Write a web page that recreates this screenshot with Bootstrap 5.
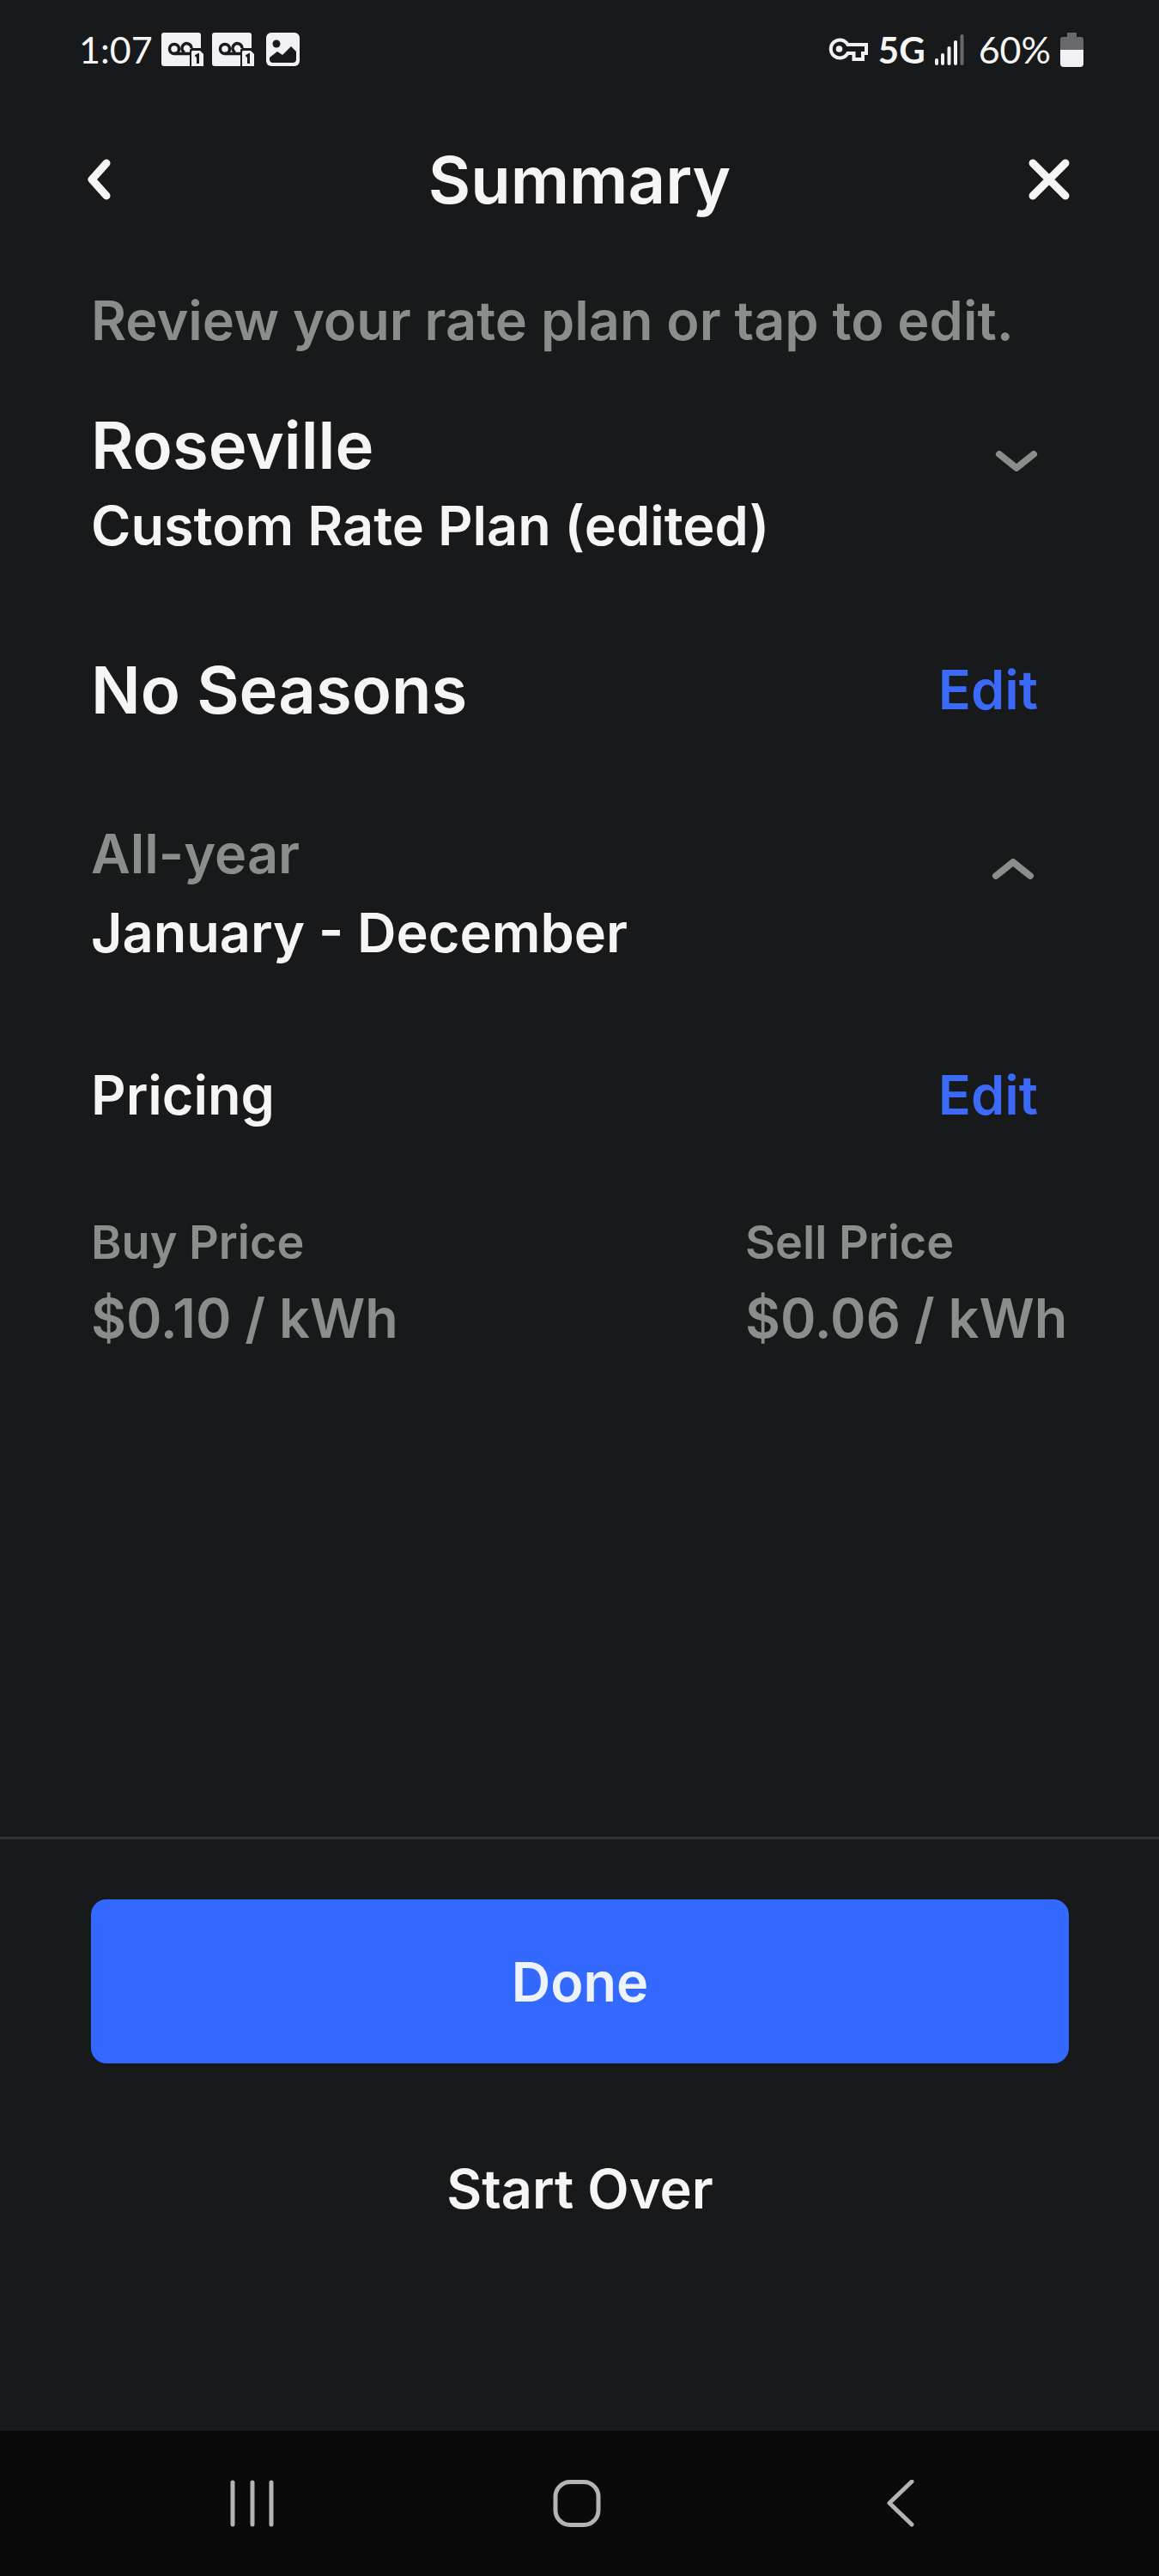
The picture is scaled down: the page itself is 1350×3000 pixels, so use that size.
<!DOCTYPE html>
<html lang="en">
<head>
<meta charset="utf-8">
<meta name="viewport" content="width=device-width, initial-scale=1">
<title>Summary</title>
<link href="https://cdn.jsdelivr.net/npm/bootstrap@5.3.0/dist/css/bootstrap.min.css" rel="stylesheet">
<style>
  body { background: #17191a; color: #f5f5f6; font-family: Inter, "Liberation Sans", sans-serif; font-weight: 600; }
  svg { display: block; flex: none; }
  .side-pad { padding-left: 106px; padding-right: 105px; }
  .status-bar { height: 116px; padding: 0 88px 0 92px; font-family: Lato, sans-serif; font-size: 43px; line-height: 60px; font-weight: 400; }
  .status-bar .network { font-size: 42px; font-weight: 700; }
  .status-left { gap: 10px; }
  .status-right { gap: 11px; }
  .app-header { height: 186px; padding: 0 92px; }
  .icon-btn { width: 64px; height: 64px; padding: 0; border: 0; background: none; color: inherit; display: flex; align-items: center; justify-content: center; }
  .text-title { font-size: 76px; line-height: 96px; font-weight: 600; margin: 0; }
  .text-main { font-size: 63px; line-height: 92px; font-weight: 600; margin: 0; }
  .text-label { font-size: 54px; line-height: 84px; font-weight: 600; margin: 0; }
  .tone-muted { color: #8b8c8c; }
  .intro { margin: 25px 0 51px; }
  .plan-rows { gap: 97px; padding-right: 36px; }
  .disclosure { border: 0; background: none; padding: 0; color: inherit; }
  .disclosure svg { margin-top: 52px; color: #8b8c8c; }
  .edit-link { color: #3b69f8; text-decoration: none; }
  .prices { margin-top: 84px; }
  .sell-col { width: 377px; }
  .action-bar { border-top: 3px solid #303133; padding-top: 70px; padding-bottom: 187px; gap: 50px; }
  .action-btn { height: 191px; border: 0; border-radius: 18px; color: #f5f5f6; }
  .action-main, .action-main:hover { background: #3369ff; color: #eef3fb; }
  .system-nav { height: 169px; background: #0a0a0a; color: #b4b4b4; padding: 0 269px 0 262px; }
</style>
<script src="https://cdn.jsdelivr.net/npm/bootstrap@5.3.0/dist/js/bootstrap.bundle.min.js"></script>
</head>
<body class="d-flex flex-column min-vh-100">

<div class="status-bar d-flex align-items-center justify-content-between">
  <div class="status-left d-flex align-items-center">
    <span>1:07</span>
    <svg width="49" height="40" viewBox="0 0 49 40" aria-hidden="true">
      <path fill="#f1f1f3" d="M3 0h40a3 3 0 0 1 3 3v15H36a3 3 0 0 0-3 3v18H3a3 3 0 0 1-3-3V3a3 3 0 0 1 3-3z"/>
      <g fill="none" stroke="#17191a" stroke-width="3.5"><circle cx="15" cy="19" r="5.5"/><path d="M35 18a5.500 5.500 0 1 0-8 5M15 24.500h18"/></g>
      <path fill="#f1f1f3" d="M36 21h9l4 4v14H35V22z"/><path d="M39.500 27.500l3-1.500v10" fill="none" stroke="#17191a" stroke-width="3"/>
    </svg>
    <svg width="49" height="40" viewBox="0 0 49 40" aria-hidden="true">
      <path fill="#f1f1f3" d="M3 0h40a3 3 0 0 1 3 3v15H36a3 3 0 0 0-3 3v18H3a3 3 0 0 1-3-3V3a3 3 0 0 1 3-3z"/>
      <g fill="none" stroke="#17191a" stroke-width="3.500"><circle cx="15" cy="19" r="5.500"/><path d="M35 18a5.500 5.500 0 1 0-8 5M15 24.500h18"/></g>
      <path fill="#f1f1f3" d="M36 21h9l4 4v14H35V22z"/><path d="M39.500 27.500l3-1.500v10" fill="none" stroke="#17191a" stroke-width="3"/>
    </svg>
    <svg width="43" height="40" viewBox="-4 0 43 40" aria-hidden="true">
      <rect width="39" height="39" rx="6" fill="#f1f1f3"/><circle cx="12" cy="13" r="4.500" fill="#17191a"/>
      <path fill="#17191a" d="M4 29l9-7 6 4 10-10 6 6v9a4 4 0 0 1-4 4H8a4 4 0 0 1-4-4z"/>
    </svg>
  </div>
  <div class="status-right d-flex align-items-center">
    <svg width="47" height="28" viewBox="0 0 47 28" aria-hidden="true">
      <path fill="none" stroke="#f1f1f3" stroke-width="4" d="M22.500 8H44v10h-4v7H29.500v-7h-7A10.500 10.500 0 1 1 22.500 8z"/><circle cx="12.500" cy="13" r="3.800" fill="#f1f1f3"/>
    </svg>
    <span class="network">5G</span>
    <svg width="40" height="36" viewBox="0 0 40 36" aria-hidden="true">
      <g fill="#f1f1f3"><rect y="28" width="4" height="8" rx="2"/><rect x="7" y="22" width="4" height="14" rx="2"/><rect x="14.500" y="14" width="4" height="22" rx="2"/><rect x="22" y="7" width="4" height="29" rx="2"/></g><rect x="29.500" width="4" height="36" rx="2" fill="#68696a"/>
    </svg>
    <span>60%</span>
    <svg width="27" height="40" viewBox="0 0 27 40" aria-hidden="true">
      <path fill="#68696a" d="M8 0h11v5h5a3 3 0 0 1 3 3v12H0V8a3 3 0 0 1 3-3h5z"/><path fill="#f1f1f3" d="M0 20h27v16a4 4 0 0 1-4 4H4a4 4 0 0 1-4-4z"/>
    </svg>
  </div>
</div>

<header class="app-header d-flex align-items-center justify-content-between">
  <button type="button" class="icon-btn" aria-label="Back">
    <svg width="48" height="48" viewBox="0 0 48 48" fill="none" stroke="currentColor" stroke-width="9" stroke-linecap="round" stroke-linejoin="round"><path d="M24 5L7 24l17 19"/></svg>
  </button>
  <h1 class="text-title">Summary</h1>
  <button type="button" class="icon-btn" aria-label="Close">
    <svg width="56" height="48" viewBox="0 0 56 48" fill="none" stroke="currentColor" stroke-width="9" stroke-linecap="round"><path d="M5 5l38 38M43 5L5 43"/></svg>
  </button>
</header>

<main class="side-pad">
  <p class="intro text-main tone-muted">Review your rate plan or tap to edit.</p>
  <div class="plan-rows d-flex flex-column">
    <button type="button" class="disclosure d-flex justify-content-between align-items-start text-start" aria-expanded="false">
      <span><span class="text-title d-block">Roseville</span><span class="text-main d-block">Custom Rate Plan (edited)</span></span>
      <svg width="52" height="32" viewBox="0 0 52 32" fill="none" stroke="currentColor" stroke-width="8" stroke-linecap="round" stroke-linejoin="round"><path d="M7 7l20 16L47 7"/></svg>
    </button>
    <div class="d-flex justify-content-between align-items-center">
      <h2 class="text-title">No Seasons</h2>
      <a href="#" class="edit-link text-main">Edit</a>
    </div>
    <button type="button" class="disclosure d-flex justify-content-between align-items-start text-start" aria-expanded="true">
      <span><span class="text-main d-block tone-muted">All-year</span><span class="text-main d-block">January - December</span></span>
      <svg width="58" height="32" viewBox="0 3 58 32" fill="none" stroke="currentColor" stroke-width="8" stroke-linecap="round" stroke-linejoin="round"><path d="M9 23L29 7l20 16"/></svg>
    </button>
    <div class="d-flex justify-content-between align-items-center">
      <h2 class="text-main">Pricing</h2>
      <a href="#" class="edit-link text-main">Edit</a>
    </div>
  </div>
  <div class="prices d-flex justify-content-between tone-muted">
    <div><p class="text-label">Buy Price</p><p class="text-main">$0.10 / kWh</p></div>
    <div class="sell-col text-nowrap"><p class="text-label">Sell Price</p><p class="text-main">$0.06 / kWh</p></div>
  </div>
</main>

<footer class="mt-auto">
  <div class="action-bar side-pad d-flex flex-column">
    <button type="button" class="btn action-btn action-main text-main w-100">Done</button>
    <button type="button" class="btn action-btn text-main w-100">Start Over</button>
  </div>
  <nav class="system-nav d-flex justify-content-between align-items-center" aria-label="System">
    <button type="button" class="icon-btn" aria-label="Recent apps">
      <svg width="56" height="56" viewBox="0 2 56 56" fill="none" stroke="currentColor" stroke-width="5" stroke-linecap="round"><path d="M5 5v49M28 5v49M50 5v49"/></svg>
    </button>
    <button type="button" class="icon-btn" aria-label="Home">
      <svg width="56" height="56" viewBox="0 0 56 56" fill="none" stroke="currentColor" stroke-width="5"><rect x="3" y="2.500" width="50" height="50" rx="17"/></svg>
    </button>
    <button type="button" class="icon-btn" aria-label="Back">
      <svg width="56" height="56" viewBox="0 1 56 56" fill="none" stroke="currentColor" stroke-width="5" stroke-linecap="round" stroke-linejoin="round"><path d="M41 3L15 28l26 25"/></svg>
    </button>
  </nav>
</footer>
</body>
</html>
